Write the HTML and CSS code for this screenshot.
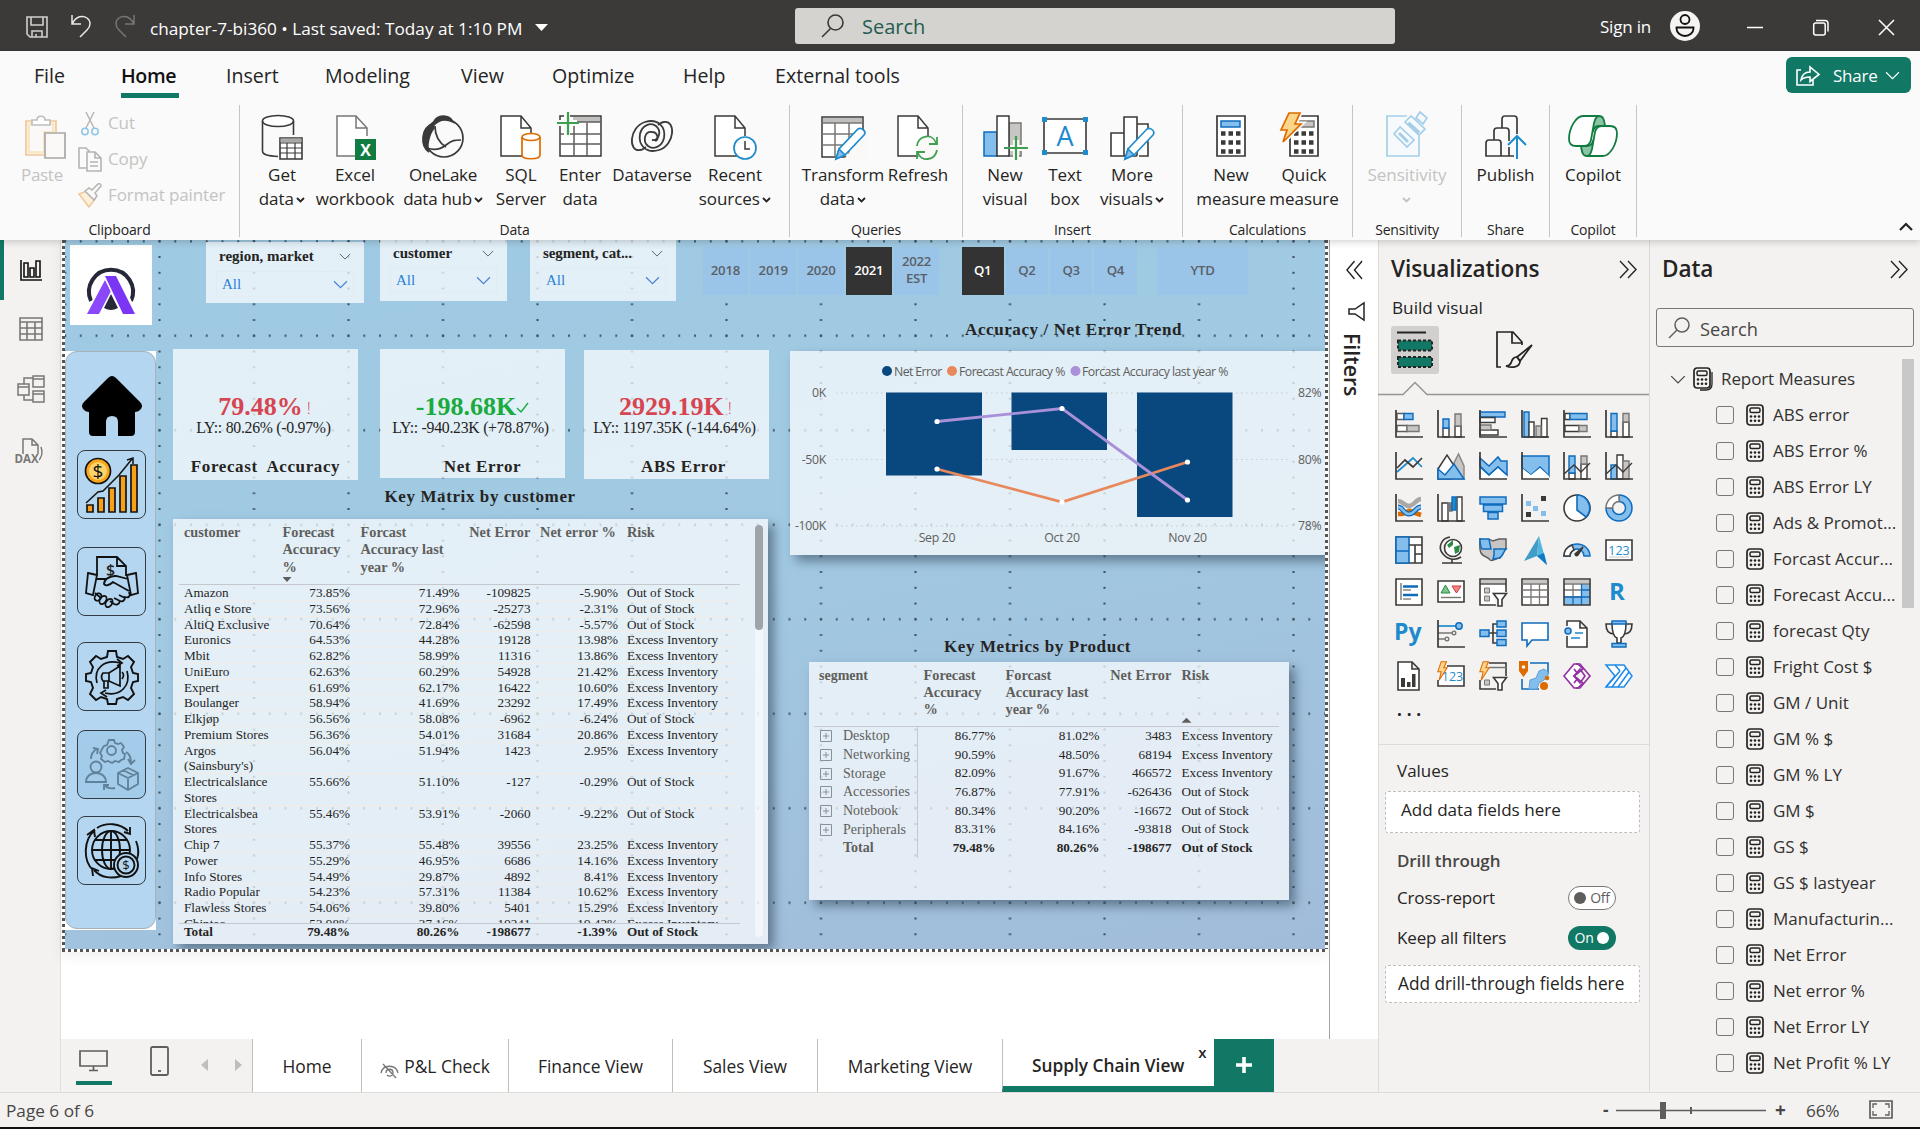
FILE: index.html
```html
<!DOCTYPE html>
<html lang="en">
<head>
<meta charset="utf-8">
<title>chapter-7-bi360</title>
<link rel="stylesheet" href="styles.css">
</head>
<body>
<svg class="defs" width="0" height="0">
  <symbol id="calc" viewBox="0 0 18 22"><g fill="none" stroke="#252423" stroke-width="1.7"><rect x="1" y="1" width="16" height="20" rx="3"/><rect x="4" y="4" width="10" height="4.5" rx="1.5" stroke-width="1.5"/></g><g fill="#252423"><circle cx="5" cy="12.5" r="1.3"/><circle cx="9" cy="12.5" r="1.3"/><circle cx="13" cy="12.5" r="1.3"/><circle cx="5" cy="16.8" r="1.3"/><circle cx="9" cy="16.8" r="1.3"/><circle cx="13" cy="16.8" r="1.3"/></g></symbol>
  <symbol id="chev" viewBox="0 0 14 8"><path d="M1 1l6 6 6-6" fill="none" stroke="currentColor" stroke-width="1.1"/></symbol>
  <symbol id="chev-s" viewBox="0 0 9 6"><path d="M1 1l3.5 3.5L8 1" fill="none" stroke="currentColor" stroke-width="1.8"/></symbol>
  <symbol id="dbl" viewBox="0 0 18 18"><path d="M1 1l8 8-8 8M9 1l8 8-8 8" fill="none" stroke="#252423" stroke-width="1.4"/></symbol>
  <symbol id="doc" viewBox="0 0 48 46"><path d="M32 22V14L22 2H2v40h22M22 2v12h10" fill="#fff" stroke="#3b3a39" stroke-width="1.5"/></symbol>
  <symbol id="bolt" viewBox="0 0 16 30"><path d="M6 1h8l-4 9h5L3 29l3-13H1z" fill="#fbd58a" stroke="#dd6b00" stroke-width="1.6"/></symbol>
  <symbol id="axes" viewBox="0 0 28 28"><path d="M1 0v27h27" fill="none" stroke="#3b3a39" stroke-width="1.7"/></symbol>
  <symbol id="plus-box" viewBox="0 0 12 12"><path d="M.5.5h11v11H.5zM3 6h6M6 3v6" fill="none" stroke="#8a9097"/></symbol>
</svg>

<header class="titlebar">
  <svg class="qa save" width="22" height="22" viewBox="0 0 22 22" fill="none" stroke="#d0cfce" stroke-width="1.6"><path d="M1 1h20v20H4l-3-3zM5 1v8h12V1M6 21v-6h10v6M10 21v-3"/></svg>
  <svg class="qa undo" width="20" height="22" viewBox="0 0 20 22" fill="none" stroke="#e8e8e8" stroke-width="1.5"><path d="M1 0v9h9M1.500 8.500C5 1 12 0 16 3s4 8 0 12l-7 7"/></svg>
  <svg class="qa redo" width="20" height="22" viewBox="0 0 20 22" fill="none" stroke="#777574" stroke-width="1.500"><path d="M19 0v9h-9M18.500 8.500C15 1 8 0 4 3s-4 8 0 12l7 7"/></svg>
  <span class="doc-title">chapter-7-bi360 • Last saved: Today at 1:10 PM</span>
  <svg class="caret" width="13" height="8" viewBox="0 0 13 8"><path d="M0 0h13L6.500 7z" fill="#fff"/></svg>
  <div class="global-search">
    <svg width="24" height="24" viewBox="0 0 24 24" fill="none" stroke="#3b3a39" stroke-width="1.6"><circle cx="14.500" cy="8.500" r="7.500"/><path d="M9.500 14.500L1 23"/></svg>
    <span>Search</span>
  </div>
  <span class="signin">Sign in</span>
  <svg class="avatar" width="30" height="30" viewBox="0 0 30 30"><circle cx="15" cy="15" r="15" fill="#f5f4f2"/><g fill="none" stroke="#111" stroke-width="1.800"><circle cx="15" cy="8.500" r="4.500"/><path d="M6.500 16.500h17v1c0 4-4 7.500-8.500 7.500s-8.500-3.500-8.500-7.500z"/></g></svg>
  <svg class="winbtns" width="150" height="18" viewBox="0 0 150 18" fill="none" stroke="#fff" stroke-width="1.500"><path d="M0 8.500h16M132 1l15 15M147 1l-15 15"/><rect x="66.700" y="4" width="11.500" height="12" rx="2"/><path d="M69 1.500h9q3 0 3 3v8"/></svg>
</header>

<section class="ribbon">
  <nav class="tabs">
    <span class="t-file">File</span><span class="t-home active">Home</span><span class="t-insert">Insert</span><span class="t-model">Modeling</span><span class="t-view">View</span><span class="t-opt">Optimize</span><span class="t-help">Help</span><span>External tools</span>
    <button class="share"><svg width="24" height="21" viewBox="0 0 24 21" fill="none" stroke="#fff" stroke-width="1.600"><path d="M5 5H1v15h16v-5M5 15c1-6 4-8 9-8V2l9 7.500-9 7v-4.500c-4 0-7 1-9 3z"/></svg><span>Share</span><svg class="sh-chev" width="15" height="9"><use href="#chev"/></svg></button>
  </nav>
  <div class="groups">
    <div class="group g-clip">
      <div class="items">
        <div class="btn paste"><svg width="42" height="46" viewBox="0 0 42 46" fill="none" stroke-width="1.700"><path d="M32 18V7H2v34h18" stroke="#f0c79d" fill="#fcf0dc"/><path d="M5 10h24v8h-9v20H5z" fill="#faf9f8" stroke="#f8e3bd"/><path d="M8 11V6h5c0-5 8-5 8 0h5v5z" fill="#fff" stroke="#c0bfbe"/><path d="M21 19h20v25H21z" fill="#faf9f8" stroke="#a9a8a7"/></svg><b>Paste</b></div>
        <div class="clip-list">
          <div><svg width="24" height="25" viewBox="0 0 24 25" fill="none" stroke-width="1.500"><path d="M8 1l8 16M16 1L8 17" stroke="#b8b7b6"/><circle cx="7" cy="20.500" r="3.200" stroke="#8fc4e4"/><circle cx="17" cy="20.500" r="3.200" stroke="#8fc4e4"/></svg><span>Cut</span></div>
          <div><svg width="24" height="25" viewBox="0 0 24 25" fill="none" stroke="#b5b4b3" stroke-width="1.600"><path d="M9 21H1V1h7l4 4M9 5h8l6 6v13H9zM17 5v6h6M12 15h8M12 19h8"/></svg><span>Copy</span></div>
          <div><svg width="24" height="25" viewBox="0 0 24 25" fill="none" stroke-width="1.500"><path d="M1 11l8-3 8 8-6 8z" stroke="#f0c79d" fill="#fdf0d8"/><path d="M7 8l4-3 3 2 6-6q3-1 3 2l-6 7 2 3-3 4z" stroke="#b5b4b3" fill="#faf9f8"/></svg><span>Format painter</span></div>
        </div>
      </div>
      <p>Clipboard</p>
    </div>
    <div class="group g-data">
      <div class="items">
        <div class="btn w74"><svg class="ico" width="42" height="46" viewBox="0 0 42 46" fill="none" stroke="#3b3a39" stroke-width="1.600"><ellipse cx="17" cy="7" rx="15.500" ry="5.500" fill="#fff"/><path d="M1.500 7v30c0 4 6 5 15.500 5.500M32.500 7v14"/><path d="M19 24h22v21H19z" fill="#fff"/><path d="M19.500 24.500h21v4h-21z" fill="#a9a8a7" stroke="none"/><path d="M19 29h22M19 34h22M19 39h22M26 29v16M34 29v16" stroke-width="1.200"/></svg><b>Get<br>data <svg class="cs" width="9" height="6"><use href="#chev-s"/></svg></b></div>
        <div class="btn w72"><svg class="ico" width="42" height="46" viewBox="0 0 42 46"><path d="M33 22V14L22 2H3v40h18M22 2v12h11" fill="#fff" stroke="#797775" stroke-width="1.500"/><path d="M21 25h21v21H21z" fill="#107c41"/><text x="31.500" y="41.500" text-anchor="middle" font-family="Open Sans" font-weight="700" font-size="16" fill="#fff">X</text></svg><b>Excel<br>workbook</b></div>
        <div class="btn w104"><svg class="ico" width="44" height="46" viewBox="0 0 44 46" fill="none" stroke="#3b3a39" stroke-width="1.700"><path d="M12 9C16 0 28 0 32 8c-8-4-14-3-20 4z" fill="#3b3a39"/><path d="M11 10C0 14-1 32 8 38c-3-5 0-18 5-24z" fill="#3b3a39"/><circle cx="23" cy="24" r="19"/><path d="M14 12c0 9 3 16 11 21M6 34c8 3 14 1 19-3 6-5 9-5 15-5"/></svg><b>OneLake<br>data hub <svg class="cs" width="9" height="6"><use href="#chev-s"/></svg></b></div>
        <div class="btn w52"><svg class="ico" width="44" height="46" viewBox="0 0 44 46"><use href="#doc" width="48" height="46"/><g fill="#fff" stroke="#dd6b00" stroke-width="1.700"><path d="M23 23v18c0 5 18 5 18 0V23"/><ellipse cx="32" cy="23" rx="9" ry="3.500"/></g></svg><b>SQL<br>Server</b></div>
        <div class="btn w66"><svg class="ico" width="46" height="46" viewBox="0 0 46 46" fill="none" stroke="#3b3a39" stroke-width="1.500"><path d="M3 2h41v40H3z" fill="#fff"/><path d="M16 3h27v5H16z" fill="#c0bfbe" stroke="none"/><path d="M3 20h41M3 30h41M17 9v33M30 9v33M3 8h41" stroke="#605e5c"/><path d="M-1 9h21M10-2v25" stroke="#faf9f8" stroke-width="6"/><path d="M0 9h22M11-2v23" stroke="#3d9f50" stroke-width="2.200"/></svg><b>Enter<br>data</b></div>
        <div class="btn w78"><svg class="ico" width="44" height="46" viewBox="0 0 44 46" fill="none" stroke="#3b3a39" stroke-width="1.800"><path d="M10 36C-2 38-1 13 15 8c13-4 21 5 19 16-2 9-11 12-16 8-6-5-3-15 4-14 6 0 7 8 3 9"/><path d="M34 8c12-2 11 23-5 28-13 4-21-5-19-16 2-9 11-12 16-8 6 5 3 15-4 14"/><path d="M10 36c3 0 4-2 6-3M34 8c-3 0-4 2-6 3"/></svg><b>Dataverse</b></div>
        <div class="btn w88"><svg class="ico" width="44" height="46" viewBox="0 0 44 46"><use href="#doc" width="48" height="46"/><circle cx="32" cy="34" r="11" fill="#fff" stroke="#1e8bcd" stroke-width="1.700"/><path d="M32 27v8h5" fill="none" stroke="#3b3a39" stroke-width="1.500"/></svg><b>Recent<br>sources <svg class="cs" width="9" height="6"><use href="#chev-s"/></svg></b></div>
      </div>
      <p>Data</p>
    </div>
    <div class="group g-query">
      <div class="items">
        <div class="btn w88"><svg class="ico" width="46" height="46" viewBox="0 0 46 46" fill="none" stroke="#3b3a39" stroke-width="1.500"><path d="M2 3h41v40H2z" fill="#fff"/><path d="M3 4h39v5H3z" fill="#c0bfbe" stroke="none"/><path d="M2 9h41M2 20h41M2 31h41M15 9v34M29 9v34" stroke="#797775"/><path d="M25 44l18-22 4 0v24H24z" fill="#faf9f8" stroke="none"/><path d="M16 45l3-10 19-20c3-2 9 2 6 6L25 41z" fill="#fff" stroke="#1e8bcd" stroke-width="1.700"/><path d="M16 45l3-10 6 6z" fill="#83beec" stroke="#1e8bcd"/></svg><b>Transform<br>data <svg class="cs" width="9" height="6"><use href="#chev-s"/></svg></b></div>
        <div class="btn w62"><svg class="ico" width="44" height="46" viewBox="0 0 44 46"><use href="#doc" width="48" height="46"/><circle cx="31" cy="34" r="12" fill="#faf9f8"/><path d="M21 32c1-11 16-13 19-3M41 23v7h-8M41 36c-2 11-16 12-19 3M21 45v-7h8" fill="none" stroke="#3d9f50" stroke-width="1.800"/></svg><b>Refresh</b></div>
      </div>
      <p>Queries</p>
    </div>
    <div class="group g-insert">
      <div class="items">
        <div class="btn w70"><svg class="ico" width="44" height="46" viewBox="0 0 44 46" stroke-width="1.500"><path d="M1 18h13v24H1z" fill="#83beec" stroke="#0f6cbd"/><path d="M26 9h12v33H26z" fill="#c8c6c4" stroke="#797775"/><path d="M14 2h12v40H14z" fill="#fff" stroke="#3b3a39"/><path d="M27 34h19M33 26v18" stroke="#faf9f8" stroke-width="6"/><path d="M21 34h24M33 22v24" stroke="#3d9f50" stroke-width="2.200"/></svg><b>New<br>visual</b></div>
        <div class="btn w50"><svg class="ico" width="48" height="46" viewBox="0 0 48 46"><path d="M3 5h42v34H3z" fill="#fff" stroke="#3b3a39" stroke-width="1.600"/><g fill="#1e8bcd"><path d="M1 3h5v5H1zM42 3h5v5h-5zM1 36h5v5H1zM42 36h5v5h-5z"/></g><text x="24" y="32" text-anchor="middle" font-family="Open Sans" font-size="27" fill="#1e8bcd">A</text></svg><b>Text<br>box</b></div>
        <div class="btn w84"><svg class="ico" width="46" height="46" viewBox="0 0 46 46" fill="#fff" stroke="#3b3a39" stroke-width="1.600"><path d="M2 19h13v23H2zM28 10h11v32H28zM15 3h13v39H15z"/><path d="M26 45l14-18v18z" fill="#faf9f8" stroke="none"/><path d="M39 28v14h-9"/><path d="M16 45l3-10 19-20c3-2 9 2 6 6L25 41z" stroke="#1e8bcd"/><path d="M16 45l3-10 6 6z" fill="#83beec" stroke="#1e8bcd"/></svg><b>More<br>visuals <svg class="cs" width="9" height="6"><use href="#chev-s"/></svg></b></div>
      </div>
      <p>Insert</p>
    </div>
    <div class="group g-calc">
      <div class="items">
        <div class="btn w74"><svg class="ico" width="30" height="46" viewBox="0 0 30 46"><path d="M1 2h28v40H1z" fill="#fff" stroke="#3b3a39" stroke-width="1.700"/><path d="M5 7h19v6H5z" fill="#83beec" stroke="#0f6cbd" stroke-width="1.500"/><path d="M5 19.500h20M5 28.500h20M5 37.500h20" stroke="#3b3a39" stroke-width="4.500" stroke-dasharray="4.500 3"/></svg><b>New<br>measure</b></div>
        <div class="btn w72"><svg class="ico shl" width="40" height="46" viewBox="0 0 40 46"><path d="M10 2h28v40H10z" fill="#fff" stroke="#3b3a39" stroke-width="1.700"/><path d="M16 7h18v6H16z" fill="#c8c6c4" stroke="#797775" stroke-width="1.500"/><path d="M14 19.500h20M14 28.500h20M14 37.500h20" stroke="#3b3a39" stroke-width="4.500" stroke-dasharray="4.500 3"/><path d="M9-1h11l-5 11h6L3 28l4-12H1z" fill="#fbd58a" stroke="#faf9f8" stroke-width="5"/><path d="M9-1h11l-5 11h6L3 28l4-12H1z" fill="#fbd58a" stroke="#dd6b00" stroke-width="1.700"/></svg><b>Quick<br>measure</b></div>
      </div>
      <p>Calculations</p>
    </div>
    <div class="group g-sens">
      <div class="items">
        <div class="btn dim"><svg class="ico" width="42" height="46" viewBox="0 0 42 46" fill="#f6fafd" stroke="#a5cfe9" stroke-width="1.700"><path d="M33 22v20H1V2h20"/><path d="M8 20l6-7 14 13-7 7z"/><path d="M13 19l9 9" stroke-width="3"/><path d="M19 8l6-6 14 13-6 6z"/><path d="M22 9l11 10" stroke-width="4"/><path d="M30 4l4-6 7 6-4 6z"/></svg><b>Sensitivity<br><svg class="cs one" width="9" height="6"><use href="#chev-s"/></svg></b></div>
      </div>
      <p>Sensitivity</p>
    </div>
    <div class="group g-share">
      <div class="items">
        <div class="btn"><svg class="ico" width="42" height="46" viewBox="0 0 42 46" fill="none" stroke="#3b3a39" stroke-width="1.700"><path d="M17 14V5q0-3 3-3h9q3 0 3 3v15M9 26V17q0-3 3-3h9q3 0 3 3v10M24 33v9M1 42V29q0-3 3-3h9q3 0 3 3v13zM16 42h13" /><path d="M32 22v23M23 31l9-9 9 9" stroke="#1e8bcd" stroke-width="2"/></svg><b>Publish</b></div>
      </div>
      <p>Share</p>
    </div>
    <div class="group g-cop">
      <div class="items">
        <div class="btn"><svg class="ico" width="50" height="46" viewBox="0 0 50 46" stroke="#107c41" stroke-width="1.800"><path d="M26 2h5c4 0 5 3 6 10h-6c-3 0-5 1-6 5l-4-3z" fill="#8cc3a3"/><path d="M24 42h-5c-4 0-5-3-6-10h6c3 0 5-1 6-5l4 3z" fill="#8cc3a3"/><path d="M31 2H15C8 2 1 14 1 25c0 5 2 7 7 7h8c4 0 6-2 7-6l3-17c1-4 2-7 5-7z" fill="#fff"/><path d="M19 42h16c7 0 14-12 14-23 0-5-2-7-7-7h-8c-4 0-6 2-7 6l-3 17c-1 4-2 7-5 7z" fill="#fff"/></svg><b>Copilot</b></div>
      </div>
      <p>Copilot</p>
    </div>
    <svg class="collapse" width="14" height="9" viewBox="0 0 14 9"><path d="M1 8l6-6 6 6" fill="none" stroke="#252423" stroke-width="2.200"/></svg>
  </div>
</section>

<main class="work">
  <aside class="rail">
    <div class="rail-item on"><svg width="22" height="22" viewBox="0 0 22 22" fill="none" stroke="#111" stroke-width="1.600"><path d="M1 1v20h21M4 4h4v14H4zM10 9h4v9h-4zM16 2h4v16h-4z"/></svg></div>
    <div class="rail-item"><svg width="24" height="24" viewBox="0 0 24 24" fill="none" stroke="#797775" stroke-width="1.600"><path d="M1 1h22v22H1zM1 5h22M1 11h22M1 17h22M8 5v18M16 5v18"/></svg></div>
    <div class="rail-item"><svg width="28" height="28" viewBox="0 0 28 28" fill="none" stroke="#797775" stroke-width="1.500"><path d="M16 1h11v11H16zM16 4h11M1 9h11v11H1zM1 12h11M16 16h11v11H16zM16 19h11M7 9V3h9M7 20v5h9"/></svg></div>
    <div class="rail-item dax"><svg width="28" height="26" viewBox="0 0 28 26" fill="none" stroke="#797775" stroke-width="1.500"><path d="M7 16V1h9l6 6v10M16 1v6h6M25 9c2 5 1 11-4 15"/></svg><i>DAX</i></div>
  </aside>

  <div class="center">
    <div class="stage">
      <div class="page-frame"><div class="page">
        <div class="v logo"><svg width="48" height="47" viewBox="0 0 48 47"><path d="M4 34A22 22 0 1 1 44 34" fill="none" stroke="#262838" stroke-width="4"/><path d="M17 11L-2 47h52L34 9z" fill="#fff"/><path d="M24 27l7 14q-7 4-14 0z" fill="#262838"/><path d="M18 13l6 11-12 23H0z" fill="#8a48fa"/><path d="M18 9h11l19 38H36z" fill="#fff" stroke="#fff" stroke-width="3"/><path d="M18 9h11l19 38H36z" fill="#7a35f5"/></svg></div>

        <div class="v nav-back"><div class="nav">
          <svg class="home" width="60" height="60" viewBox="0 0 60 60"><path d="M26 2q4-4 8 0l24 24q4 4 0 8-2 2-5 2v20q0 4-4 4H36V46q0-6-6-6t-6 6v14H11q-4 0-4-4V36q-3 0-5-2-4-4 0-8z"/></svg>
          <div class="nb n1"><svg width="54" height="56" viewBox="0 0 54 56" stroke="#141414" stroke-width="1.700"><circle cx="13" cy="14" r="12.500" fill="#f9a61c"/><circle cx="13" cy="14" r="9" fill="#fcd46c" stroke="none"/><text x="13" y="20.500" text-anchor="middle" font-family="Open Sans" font-size="19" stroke="none" fill="#111">$</text><path d="M2 48h6v7H2zM13 41h6v14h-6zM24 31h6v24h-6zM35 19h6v36h-6zM46 8h6v47h-6z" fill="#f9a01b"/><path d="M1 46l12-11 5-1 16-16 13-16M42 3l6-2v6" fill="none" stroke-width="1.500"/></svg></div>
          <div class="nb n2"><svg width="54" height="54" viewBox="0 0 54 54" fill="none" stroke="#111" stroke-width="1.800"><path d="M12 21V2h20l9 9v10M32 2v9h9M3 18l9 2-4 20-7-2zM51 18l-9 2 4 20 7-2zM12 24h8c5 0 6-4 11-3l12 3M10 38l6 5M44 36L28 27c-4 4-8 4-9 2 0-5 6-8 11-8M44 37c2 5-1 6-4 5 0 4-3 5-5 4-1 4-4 4-6 3l-4-3"/><ellipse cx="13" cy="42" rx="3" ry="4" transform="rotate(35 13 42)"/><ellipse cx="18" cy="45" rx="3" ry="4.500" transform="rotate(35 18 45)"/><ellipse cx="24" cy="48" rx="3" ry="4.500" transform="rotate(35 24 48)"/><path d="M34 40l6 3M29 43l6 3"/></svg><i>$</i></div>
          <div class="nb n3"><svg width="54" height="54" viewBox="0 0 54 54" fill="none" stroke="#111" stroke-width="1.900"><path d="M23 1h8l1 6 6 2 5-3 6 6-3 5 2 6 5 1v7l-5 1-2 6 3 6-6 6-5-3-6 2-1 5h-8l-1-5-6-2-5 3-6-6 3-6-2-6-5-1v-7l5-1 2-6-3-5 6-6 5 3 6-2z"/><path d="M12 33C8 18 20 9 35 13M42 21c4 14-6 26-22 22M32 9l5 4-5 3M22 47l-6-4 5-3M18 23h6l11-7v20l-11-5h-6q-3-4 0-8zM24 23v8M19 31v7h4v-7M37 22q3 3 0 7" stroke-width="1.700"/></svg></div>
          <div class="nb n4"><svg width="54" height="52" viewBox="0 0 54 52" fill="none" stroke="#5f8199" stroke-width="1.800"><path d="M24 1h5l1 3 3 1 3-1 3 4-2 3 1 3 2 1-1 5-3 1-2 2-4-1-3 2-4-2-3 1-4-3 1-3-2-3 2-4 2-3 3-1z"/><circle cx="26.500" cy="11.500" r="4.500"/><circle cx="11" cy="28" r="5.500"/><path d="M1 43c0-12 20-12 20 0zM33 34l10-5 10 5v11l-10 6-10-6zM33 34l10 5 10-5M43 39v12M38 31l10 5M6 20c0-5 2-8 6-10M8 9l5 1-1 5M41 13c4 2 5 5 5 11M43 20l3 5 4-4M30 49c-5 1-8 0-11-3M19 51v-5h5"/></svg></div>
          <div class="nb n5"><svg width="56" height="56" viewBox="0 0 56 56" fill="none" stroke="#111" stroke-width="1.900"><circle cx="27" cy="27" r="19"/><path d="M27 8v38M8 27h38M11 17h32M11 37h30"/><ellipse cx="27" cy="27" rx="9" ry="19"/><path d="M11 7C-1 17-1 38 9 47M13 5c9-6 23-5 31 3M40 9l6 2V4M52 18q4 10 1 18M3 12l7-5 1 7M8 45l1 8M8 45l7 3M10 47c7 8 18 9 27 6"/><circle cx="42" cy="42" r="12" fill="#b4d6f0"/><circle cx="42" cy="42" r="8.500"/><text x="42" y="47" text-anchor="middle" font-family="Open Sans" font-size="13" stroke="none" fill="#111">$</text></svg></div>
        </div></div>

        <div class="v slicer s1"><div class="sh"><b>region, market</b><svg width="12" height="7"><use href="#chev"/></svg></div><div class="sv"><span>All</span><svg width="15" height="9"><use href="#chev"/></svg></div></div>
        <div class="v slicer s2"><div class="sh"><b>customer</b><svg width="12" height="7"><use href="#chev"/></svg></div><div class="sv"><span>All</span><svg width="15" height="9"><use href="#chev"/></svg></div></div>
        <div class="v slicer s3"><div class="sh"><b>segment, cat...</b><svg width="12" height="7"><use href="#chev"/></svg></div><div class="sv"><span>All</span><svg width="15" height="9"><use href="#chev"/></svg></div></div>

        <div class="v tiles years"><span>2018</span><span>2019</span><span>2020</span><span class="sel">2021</span><span>2022<br>EST</span></div>
        <div class="v tiles qtrs"><span class="sel">Q1</span><span>Q2</span><span>Q3</span><span>Q4</span></div>
        <div class="v tiles ytd"><span>YTD</span></div>

        <h3 class="v h-trend">Accuracy / Net Error Trend</h3>

        <div class="v kpi k1"><div class="kv red">79.48%<em>!</em></div><div class="ly">LY:: 80.26% (-0.97%)</div><h3>Forecast&nbsp; Accuracy</h3></div>
        <div class="v kpi k2"><div class="kv green">-198.68K<svg width="13" height="11" viewBox="0 0 13 11"><path d="M1 6l4 4L12 1" fill="none" stroke="#1aab40" stroke-width="1.400"/></svg></div><div class="ly">LY:: -940.23K (+78.87%)</div><h3>Net Error</h3></div>
        <div class="v kpi k3"><div class="kv red">2929.19K<em>!</em></div><div class="ly">LY:: 1197.35K (-144.64%)</div><h3>ABS Error</h3></div>

        <h3 class="v h-matrix">Key Matrix by customer</h3>
        <div class="v card cust">
          <div class="row head"><span>customer</span><span>Forecast Accuracy %<i class="down"></i></span><span>Forcast Accuracy last year %</span><span>Net Error</span><span>Net error %</span><span>Risk</span></div>
          <div class="rows">
            <div class="row"><span>Amazon</span><span>73.85%</span><span>71.49%</span><span>-109825</span><span>-5.90%</span><span>Out of Stock</span></div>
            <div class="row"><span>Atliq e Store</span><span>73.56%</span><span>72.96%</span><span>-25273</span><span>-2.31%</span><span>Out of Stock</span></div>
            <div class="row"><span>AltiQ Exclusive</span><span>70.64%</span><span>72.84%</span><span>-62598</span><span>-5.57%</span><span>Out of Stock</span></div>
            <div class="row"><span>Euronics</span><span>64.53%</span><span>44.28%</span><span>19128</span><span>13.98%</span><span>Excess Inventory</span></div>
            <div class="row"><span>Mbit</span><span>62.82%</span><span>58.99%</span><span>11316</span><span>13.86%</span><span>Excess Inventory</span></div>
            <div class="row"><span>UniEuro</span><span>62.63%</span><span>60.29%</span><span>54928</span><span>21.42%</span><span>Excess Inventory</span></div>
            <div class="row"><span>Expert</span><span>61.69%</span><span>62.17%</span><span>16422</span><span>10.60%</span><span>Excess Inventory</span></div>
            <div class="row"><span>Boulanger</span><span>58.94%</span><span>41.69%</span><span>23292</span><span>17.49%</span><span>Excess Inventory</span></div>
            <div class="row"><span>Elkjøp</span><span>56.56%</span><span>58.08%</span><span>-6962</span><span>-6.24%</span><span>Out of Stock</span></div>
            <div class="row"><span>Premium Stores</span><span>56.36%</span><span>54.01%</span><span>31684</span><span>20.86%</span><span>Excess Inventory</span></div>
            <div class="row two"><span>Argos<br>(Sainsbury's)</span><span>56.04%</span><span>51.94%</span><span>1423</span><span>2.95%</span><span>Excess Inventory</span></div>
            <div class="row two"><span>Electricalslance<br>Stores</span><span>55.66%</span><span>51.10%</span><span>-127</span><span>-0.29%</span><span>Out of Stock</span></div>
            <div class="row two"><span>Electricalsbea<br>Stores</span><span>55.46%</span><span>53.91%</span><span>-2060</span><span>-9.22%</span><span>Out of Stock</span></div>
            <div class="row"><span>Chip 7</span><span>55.37%</span><span>55.48%</span><span>39556</span><span>23.25%</span><span>Excess Inventory</span></div>
            <div class="row"><span>Power</span><span>55.29%</span><span>46.95%</span><span>6686</span><span>14.16%</span><span>Excess Inventory</span></div>
            <div class="row"><span>Info Stores</span><span>54.49%</span><span>29.87%</span><span>4892</span><span>8.41%</span><span>Excess Inventory</span></div>
            <div class="row"><span>Radio Popular</span><span>54.23%</span><span>57.31%</span><span>11384</span><span>10.62%</span><span>Excess Inventory</span></div>
            <div class="row"><span>Flawless Stores</span><span>54.06%</span><span>39.80%</span><span>5401</span><span>15.29%</span><span>Excess Inventory</span></div>
            <div class="row"><span>Chiptec</span><span>53.98%</span><span>37.16%</span><span>19241</span><span>19.42%</span><span>Excess Inventory</span></div>
          </div>
          <div class="row total"><span>Total</span><span>79.48%</span><span>80.26%</span><span>-198677</span><span>-1.39%</span><span>Out of Stock</span></div>
          <div class="track"><div class="thumb"></div></div>
        </div>

        <div class="v card chart">
          <svg width="536" height="204" viewBox="0 0 536 204">
            <g stroke="#c4cbd1" stroke-dasharray="1.500 3.500"><path d="M46 42h454M46 108.500h454M46 175h454"/></g>
            <g fill="#09477f"><path d="M96 41.500h96v83H96zM221.500 41.500H317v57.500h-95.500zM347 41.500h95.500v124.500H347z"/></g>
            <g fill="none" stroke-width="2.800"><path d="M147 118l125 33 125.500-40" stroke="#e8885c"/><path d="M147 70.500l125-13L397.500 149" stroke="#a991d9"/></g>
            <g fill="#fff"><circle cx="147" cy="118" r="2.600"/><circle cx="272" cy="151" r="2.600"/><circle cx="397.500" cy="111" r="2.600"/><circle cx="147" cy="70.500" r="2.600"/><circle cx="272" cy="57.500" r="2.600"/><circle cx="397.500" cy="149" r="2.600"/></g>
            <circle cx="97" cy="20" r="5" fill="#09477f"/><circle cx="162" cy="20" r="5" fill="#e8885c"/><circle cx="285.500" cy="20" r="5" fill="#a991d9"/>
            <g class="ct"><text x="104" y="24.500" textLength="48">Net Error</text><text x="169" y="24.500" textLength="106">Forecast Accuracy %</text><text x="292" y="24.500" textLength="146">Forcast Accuracy last year %</text>
            <g text-anchor="end"><text x="36" y="46">0K</text><text x="36" y="113">-50K</text><text x="36" y="179">-100K</text></g>
            <text x="508" y="46">82%</text><text x="508" y="113">80%</text><text x="508" y="179">78%</text>
            <g text-anchor="middle"><text x="147" y="191">Sep 20</text><text x="272" y="191">Oct 20</text><text x="397.500" y="191">Nov 20</text></g></g>
          </svg>
        </div>

        <h3 class="v h-prod">Key Metrics by Product</h3>
        <div class="v card prod">
          <div class="prow phead"><span>segment</span><span>Forecast Accuracy %</span><span>Forcast Accuracy last year %</span><span>Net Error</span><span>Risk<i class="up"></i></span></div>
          <div class="prow"><span><svg width="12" height="12"><use href="#plus-box"/></svg>Desktop</span><span>86.77%</span><span>81.02%</span><span>3483</span><span>Excess Inventory</span></div>
          <div class="prow"><span><svg width="12" height="12"><use href="#plus-box"/></svg>Networking</span><span>90.59%</span><span>48.50%</span><span>68194</span><span>Excess Inventory</span></div>
          <div class="prow"><span><svg width="12" height="12"><use href="#plus-box"/></svg>Storage</span><span>82.09%</span><span>91.67%</span><span>466572</span><span>Excess Inventory</span></div>
          <div class="prow"><span><svg width="12" height="12"><use href="#plus-box"/></svg>Accessories</span><span>76.87%</span><span>77.91%</span><span>-626436</span><span>Out of Stock</span></div>
          <div class="prow"><span><svg width="12" height="12"><use href="#plus-box"/></svg>Notebook</span><span>80.34%</span><span>90.20%</span><span>-16672</span><span>Out of Stock</span></div>
          <div class="prow"><span><svg width="12" height="12"><use href="#plus-box"/></svg>Peripherals</span><span>83.31%</span><span>84.16%</span><span>-93818</span><span>Out of Stock</span></div>
          <div class="prow ptotal"><span>Total</span><span>79.48%</span><span>80.26%</span><span>-198677</span><span>Out of Stock</span></div>
        </div>
      </div></div>
      <aside class="filters"><svg class="flip" width="17" height="20" viewBox="0 0 18 18" preserveAspectRatio="none"><use href="#dbl"/></svg><svg class="funnel" width="17" height="19" viewBox="0 0 17 19" fill="none" stroke="#252423" stroke-width="1.500"><path d="M16 1v17L7 12H1V7h6z"/></svg><b>Filters</b></aside>
    </div>
    <footer class="pages">
      <div class="views">
        <div class="desk"><svg width="29" height="22" viewBox="0 0 29 22" fill="none" stroke="#605e5c" stroke-width="1.700"><path d="M1 1h27v15H1zM14.500 16v4M10 20.500h9"/></svg></div>
        <svg class="phone" width="19" height="30" viewBox="0 0 19 30" fill="none" stroke="#605e5c" stroke-width="1.800"><rect x="1" y="1" width="17" height="28" rx="1.500"/><path d="M8 25h3"/></svg>
        <svg class="ar" width="7" height="12" viewBox="0 0 7 12"><path d="M7 0v12L0 6z" fill="#c0bebc"/></svg>
        <svg class="ar r" width="7" height="12" viewBox="0 0 7 12"><path d="M0 0v12l7-6z" fill="#c0bebc"/></svg>
      </div>
      <span class="pt p1">Home</span>
      <span class="pt p2"><svg width="19" height="16" viewBox="0 0 19 16" fill="none" stroke="#797775" stroke-width="1.300"><path d="M1 10C3 1 16 1 18 10M6 10c0-5 7-5 7 0 0 3-4 4-6 2M3 1l13 14"/></svg>P&amp;L Check</span>
      <span class="pt p3">Finance View</span><span class="pt p4">Sales View</span><span class="pt p5">Marketing View</span>
      <span class="pt p6">Supply Chain View<i>x</i></span>
      <span class="add"><svg width="16" height="16" viewBox="0 0 16 16"><path d="M8 0v16M0 8h16" stroke="#fff" stroke-width="3.600"/></svg></span>
    </footer>
  </div>

  <aside class="viz">
    <div class="ph"><h2>Visualizations</h2><svg width="18" height="19" viewBox="0 0 18 18" preserveAspectRatio="none"><use href="#dbl"/></svg></div>
    <div class="bv">Build visual</div>
    <div class="modes"><div class="mode on"><svg width="36" height="38" viewBox="0 0 36 38"><path d="M0 1.500h29" stroke="#252423" stroke-width="2"/><path d="M1 9.500h34v10H1zM1 26h34v10H1z" fill="#117865" stroke="#252423" stroke-width="2" stroke-dasharray="3 2"/></svg></div>
    <svg width="37" height="38" viewBox="0 0 37 38" fill="none" stroke="#252423" stroke-width="1.700"><path d="M5 36H1V1h16l9 10v3M16 1v11h10"/><path d="M36 14L21 26l3 4z" fill="#f3f2f1"/><path d="M21 26c-4 0-5 3-6 6-1 2-3 3-5 3 5 2 14 2 14-5z"/></svg></div>
    <svg class="notch" width="271" height="15" viewBox="0 0 271 15"><path d="M0 13.500h25l12-12 12 12h222" fill="none" stroke="#979593" stroke-width="1.500"/></svg>
    <div class="vgrid">
      <svg viewBox="0 0 28 28"><g stroke-width="1.400"><path d="M2 3.500h7v6H2z" fill="#fff" stroke="#605e5c"/><path d="M9 3.500h9v6H9z" fill="#83beec" stroke="#0f6cbd"/><path d="M2 15.500h10v6H2z" fill="#fff" stroke="#605e5c"/><path d="M12 15.500h12v6H12z" fill="#c8c6c4" stroke="#797775"/></g><use href="#axes"/></svg>
      <svg viewBox="0 0 28 28"><g stroke-width="1.400"><path d="M6 18h6v9H6zM18 16h6v11h-6z" fill="#fff" stroke="#3b3a39"/><path d="M6 9h6v9H6z" fill="#83beec" stroke="#0f6cbd"/><path d="M18 4h6v12h-6z" fill="#c8c6c4" stroke="#797775"/></g><use href="#axes"/></svg>
      <svg viewBox="0 0 28 28"><g stroke-width="1.400"><path d="M1 2h25v5H1z" fill="#83beec" stroke="#0f6cbd"/><path d="M1 7.500h15v5H1zM1 20h18v5H1z" fill="#fff" stroke="#3b3a39"/><path d="M1 15h11v5H1z" fill="#c8c6c4" stroke="#797775"/></g><use href="#axes"/></svg>
      <svg viewBox="0 0 28 28"><g stroke-width="1.400"><path d="M3 2h5v25H3z" fill="#83beec" stroke="#0f6cbd"/><path d="M8 12h5v15H8zM20.500 8.500H26V27h-5.500z" fill="#fff" stroke="#3b3a39"/><path d="M15 16h5v11h-5z" fill="#c8c6c4" stroke="#797775"/></g><use href="#axes"/></svg>
      <svg viewBox="0 0 28 28"><g stroke-width="1.400"><path d="M2 3.500h5v6H2zM2 15.500h14v6H2z" fill="#fff" stroke="#3b3a39"/><path d="M7 3.500h17v6H7z" fill="#83beec" stroke="#0f6cbd"/><path d="M16 15.500h8v6h-8z" fill="#c8c6c4" stroke="#797775"/></g><use href="#axes"/></svg>
      <svg viewBox="0 0 28 28"><g stroke-width="1.400"><path d="M6 21h6v6H6zM18 12h6v15h-6z" fill="#fff" stroke="#3b3a39"/><path d="M6 3.500h6V21H6z" fill="#83beec" stroke="#0f6cbd"/><path d="M18 3.500h6V12h-6z" fill="#c8c6c4" stroke="#797775"/></g><use href="#axes"/></svg>

      <svg viewBox="0 0 28 28" fill="none" stroke-width="1.700"><path d="M2 20L18 6l9 9" stroke="#1e8bcd"/><path d="M2 16l8-8 8 7 9-9" stroke="#3b3a39"/><use href="#axes"/></svg>
      <svg viewBox="0 0 28 28" stroke-width="1.500"><path d="M15 27V15l6.500-13L27 14v13z" fill="#c8c6c4" stroke="#8a8886"/><path d="M1 17l9-14 8 12-4 12H1z" fill="#fff" stroke="#3b3a39"/><path d="M1 17l7 6 9-11 10 15H1z" fill="#83beec" stroke="#0f6cbd"/></svg>
      <svg viewBox="0 0 28 28" stroke-width="1.500"><path d="M1 6l9 8 9-9 3 4h6v14l-9-8-9 8-9-9z" fill="#83beec" stroke="#0f6cbd"/><path d="M2 16l8 8 9-8 9 8v3H2z" fill="#fff"/><path d="M1 15l9 8 9-8 9 8" fill="none" stroke="#0f6cbd"/><use href="#axes"/></svg>
      <svg viewBox="0 0 28 28" stroke-width="1.500"><path d="M1 4h27v20l-9-9-9 8-9-7z" fill="#83beec" stroke="#0f6cbd"/><path d="M2 17l8 6 9-7 9 8v3H2z" fill="#fff"/><use href="#axes"/></svg>
      <svg viewBox="0 0 28 28" stroke-width="1.400" fill="#fff" stroke="#3b3a39"><path d="M6 21h6v6H6zM18 12h6v15h-6z"/><path d="M6 4h6v17H6z" fill="#83beec" stroke="#0f6cbd"/><path d="M18 4h6v8h-6z" fill="#c8c6c4" stroke="#797775"/><path d="M1 22l10-9 7 7 9-9" fill="none"/><use href="#axes"/></svg>
      <svg viewBox="0 0 28 28" stroke-width="1.400" fill="#fff" stroke="#3b3a39"><path d="M6 13h6v14H6z" fill="#83beec" stroke="#0f6cbd"/><path d="M12 3h6v24h-6z"/><path d="M18 9h6v18h-6z" fill="#c8c6c4" stroke="#797775"/><path d="M1 22l10-9 7 7 9-9" fill="none"/><use href="#axes"/></svg>

      <svg viewBox="0 0 28 28" fill="none"><path d="M3 20h4c5 0 6-6 10-2l9 3" stroke="#dd6b00" stroke-width="4.500"/><path d="M3 7c5 0 6 5 11 5s7-7 12-7" stroke="#a9a8a7" stroke-width="4.500"/><path d="M3 13c5 0 5 7 11 7s6-7 12-7" stroke="#0f6cbd" stroke-width="5"/><path d="M3 13c5 0 5 7 11 7s6-7 12-7" stroke="#83beec" stroke-width="2.500"/><use href="#axes"/></svg>
      <svg viewBox="0 0 28 28" stroke-width="1.400" fill="#fff" stroke="#3b3a39"><path d="M5 9h6v18H5zM20 3h5v24h-5z"/><path d="M11 9h4v8h-4z" fill="#797775" stroke="#797775"/><path d="M15 3h4v13h-4z" fill="#1e8bcd" stroke="#0f6cbd"/><use href="#axes"/></svg>
      <svg viewBox="0 0 28 28" stroke-width="1.500" fill="#83beec" stroke="#0f6cbd"><path d="M1 3h26v7H1zM4.500 11h19v6.500h-19zM9 18.500h10V25H9z"/></svg>
      <svg viewBox="0 0 28 28"><g fill="#83beec"><path d="M5 7h5v5H5zM12 12h5v5h-5zM20 17h5v5h-5z"/></g><path d="M20 2h5v5h-5zM5 18h5v5H5z" fill="#3b3a39"/><use href="#axes"/></svg>
      <svg viewBox="0 0 28 28" stroke-width="1.600"><circle cx="14" cy="14" r="13" fill="#fff" stroke="#3b3a39"/><path d="M14 1a13 13 0 0 1 9 22L14 16z" fill="#83beec" stroke="#0f6cbd"/></svg>
      <svg viewBox="0 0 28 28" stroke-width="1.500"><path d="M14 1a13 13 0 1 1-13 13h6.500A6.500 6.500 0 1 0 14 7.500z" fill="#83beec" stroke="#0f6cbd"/><path d="M1 14A13 13 0 0 1 14 1v6.500A6.500 6.500 0 0 0 7.500 14z" fill="#fff" stroke="#797775"/></svg>

      <svg viewBox="0 0 28 28" stroke-width="1.600" fill="#fff" stroke="#3b3a39"><path d="M1 1h26v26H1z"/><path d="M1 1h13v14H1zM1 15h13v12H1z" fill="#83beec" stroke="#0f6cbd"/><path d="M14 9h13M20 9v18M20 18h7" /></svg>
      <svg viewBox="0 0 28 28" fill="none" stroke="#3b3a39" stroke-width="1.600"><circle cx="16" cy="12" r="8.500" fill="#fff"/><path d="M10 9l6-5v5l-4 3zM17 11l6-2-1 7-4 2z" fill="#2e8b45" stroke="none"/><path d="M13 1C5 2 0 11 6 18s14 6 18 3M15 23v4M5 27h20"/></svg>
      <svg viewBox="0 0 28 28" stroke-width="1.500" stroke="#605e5c"><path d="M1 3c5 2 9-1 13 2l6-2h7v10c-3 2-3 5-6 9-4 0-7 4-10 2-2-4-6-2-9-7-2-4-1-9-1-14z" fill="#c8c6c4"/><path d="M1 3h9l2 10H3C1 10 1 7 1 3zM15 13h12c-3 3-3 8-7 9l-6 1 1-4z" fill="#83beec" stroke="#0f6cbd"/></svg>
      <svg viewBox="0 0 28 28"><path d="M18 0L3 25l13-5z" fill="#3f9dc8"/><path d="M18 0l8 29-10-9z" fill="#52b5dc"/><path d="M16 20l10 9-3-12z" fill="#0f78c8"/></svg>
      <svg viewBox="0 0 28 28" stroke-width="1.500"><path d="M1 20A13 12 0 0 1 27 20h-6q-1-7-7-7t-7 7z" fill="#83beec" stroke="#0f6cbd"/><path d="M1 20A13 12 0 0 1 9 9l2 5q-4 2-4 6z" fill="#fff" stroke="#3b3a39"/><path d="M20 11l-8 7q1 3 3 1z" stroke="#3b3a39" fill="#3b3a39"/></svg>
      <svg viewBox="0 0 28 28"><path d="M1 4h26v20H1z" fill="#fff" stroke="#3b3a39" stroke-width="1.600"/><text x="14" y="18.500" text-anchor="middle" font-family="Open Sans" font-size="12.500" fill="#1e8bcd">123</text><path d="M4 21h20" stroke="#c8c6c4"/></svg>

      <svg viewBox="0 0 28 28"><path d="M1 1h26v26H1z" fill="#fff" stroke="#3b3a39" stroke-width="1.600"/><path d="M6 5v17M8 12h8M8 21h8" stroke="#8a8886" stroke-width="1.600"/><path d="M8 8.500h15M8 17h15" stroke="#0f6cbd" stroke-width="2.600"/></svg>
      <svg viewBox="0 0 28 28"><path d="M1 3h26v21H1z" fill="#fff" stroke="#3b3a39" stroke-width="1.600"/><path d="M4 15l4.500-8 4.500 8z" fill="#7cc48a" stroke="#2e8b45"/><path d="M15 8h9l-4.500 7z" fill="#f08a88" stroke="#d13438"/><path d="M4 19.500h20" stroke="#797775" stroke-width="1.400"/></svg>
      <svg viewBox="0 0 28 28"><path d="M1 1h26v26H1z" fill="#fff" stroke="#3b3a39" stroke-width="1.600"/><path d="M2 2h24v3.500H2z" fill="#c8c6c4"/><path d="M1 6h26" stroke="#3b3a39" stroke-width="1.300"/><path d="M5.500 10h5v5h-5zM5.500 18h5v5h-5z" fill="#c8c6c4" stroke="#797775"/><path d="M13 14h17v16H18z" fill="#f3f2f1"/><path d="M14.500 15.500h13l-4.500 6V28h-4v-6.500z" fill="#fff" stroke="#3b3a39" stroke-width="1.600"/></svg>
      <svg viewBox="0 0 28 28"><path d="M1 1h26v26H1z" fill="#fff" stroke="#3b3a39" stroke-width="1.600"/><path d="M2 2h24v3.500H2z" fill="#c8c6c4"/><path d="M1 6h26M1 12h26M1 19h26M10 6v21M18.500 6v21" stroke="#797775" stroke-width="1.300"/></svg>
      <svg viewBox="0 0 28 28"><path d="M1 1h26v26H1z" fill="#fff"/><path d="M18.500 6H27v21H1v-8h17.500z" fill="#83beec"/><path d="M2 2h24v3.500H2z" fill="#c8c6c4"/><path d="M1 6h26M1 12h17M10 6v13M1 19h17" stroke="#797775" stroke-width="1.300"/><path d="M18.500 6v21M18 12h9M1 19h26M10 19v8" stroke="#0f6cbd" stroke-width="1.300"/><path d="M1 1h26v26H1z" fill="none" stroke="#3b3a39" stroke-width="1.600"/></svg>
      <svg viewBox="0 0 28 28"><text x="12" y="22" text-anchor="middle" font-family="Open Sans" font-weight="700" font-size="24" fill="#1e8bcd">R</text></svg>

      <svg class="of" viewBox="0 0 28 28"><text x="-1" y="20" font-family="Open Sans" font-weight="700" font-size="23" fill="#1e8bcd">Py</text></svg>
      <svg viewBox="0 0 28 28"><path d="M1 6h20" stroke="#1e8bcd" stroke-width="1.700"/><path d="M1 13h15M1 19h8" stroke="#797775" stroke-width="1.500"/><circle cx="22" cy="6" r="3.200" fill="#83beec" stroke="#0f6cbd" stroke-width="1.500"/><circle cx="17" cy="13" r="1.800" fill="#fff" stroke="#797775" stroke-width="1.400"/><circle cx="10" cy="19" r="1.800" fill="#fff" stroke="#797775" stroke-width="1.400"/><use href="#axes"/></svg>
      <svg viewBox="0 0 28 28"><path d="M10 13h8M18 4h-4v19h4" fill="none" stroke="#3b3a39" stroke-width="1.600"/><path d="M1 10h9v6.500H1zM18 1h9v6h-9zM18 10h9v6.500h-9zM18 19.500h9v6h-9z" fill="#83beec" stroke="#0f6cbd" stroke-width="1.500"/></svg>
      <svg viewBox="0 0 28 28"><path d="M1 3h26v17H11l-5 6v-6H1z" fill="#fff" stroke="#0f6cbd" stroke-width="1.600"/></svg>
      <svg viewBox="0 0 28 28"><path d="M4 6V1h13l7 7v19H4V16M17 1v7h7" fill="#fff" stroke="#3b3a39" stroke-width="1.600"/><circle cx="5" cy="11" r="3" fill="#83beec" stroke="#0f6cbd" stroke-width="1.500"/><path d="M12 13h8M8 18h9" stroke="#1e8bcd" stroke-width="1.400"/></svg>
      <svg viewBox="0 0 28 28" stroke="#3b3a39" stroke-width="1.600" fill="#fff"><path d="M7 4H1q0 10 8 10M21 4h6q0 10-8 10" fill="none"/><path d="M7 3h14c0 9-2 14-5 15v5h-4v-5C9 17 7 12 7 3z"/><path d="M7 1h14v3H7zM7 23.500h14V27H7z" fill="#83beec" stroke="#0f6cbd" stroke-width="1.400"/></svg>

      <svg viewBox="0 0 28 28"><path d="M3 0h14l7 7v21H3zM17 0v7h7" fill="#fff" stroke="#3b3a39" stroke-width="1.600"/><path d="M6 16h4v9H6zM12 20h3.500v5H12zM17 12h3.500v13H17z" fill="#3b3a39"/></svg>
      <svg class="of" viewBox="0 0 28 28"><path d="M10 4h17v20H1V18" fill="#fff" stroke="#3b3a39" stroke-width="1.600"/><text x="15.500" y="18.500" text-anchor="middle" font-family="Open Sans" font-size="12.500" fill="#1e8bcd">123</text><use href="#bolt" x="-2" y="-1" width="15" height="20" /></svg>
      <svg class="of" viewBox="0 0 28 28"><path d="M10 1h17v26H1V18" fill="#f3f2f1" stroke="#3b3a39" stroke-width="1.600"/><path d="M10 5.500h17" stroke="#797775" stroke-width="1.500"/><path d="M5.500 18h5v5h-5z" fill="#c8c6c4" stroke="#797775"/><path d="M13 14h17v16H18z" fill="#f3f2f1"/><path d="M14.500 15.500h13l-4.500 6V28h-4v-6.500z" fill="#fff" stroke="#3b3a39" stroke-width="1.600"/><use href="#bolt" x="-2" y="-1" width="15" height="20" /></svg>
      <svg class="of" viewBox="0 0 28 28"><path d="M9 1h18v11M1 17v10h17" fill="none" stroke="#0f6cbd" stroke-width="1.600"/><path d="M27 10l-4-3-5 2-3 7-6 2-1 9h8l2-6 5-3 4-4z" fill="#83beec" stroke="#5aa3dc"/><path d="M-2-1h9v10L2.500 15-2 9z" fill="#dd6b00"/><circle cx="2.500" cy="5" r="1.800" fill="#fff"/><circle cx="26" cy="16" r="2.300" fill="#dd6b00"/><circle cx="23" cy="24" r="4" fill="#dd6b00"/></svg>
      <svg viewBox="0 0 28 28" fill="none" stroke="#8f2fa0" stroke-width="1.600"><path d="M1 14L11 2h4l5 5-9 7 9 7-5 5h-4z" fill="#fff"/><path d="M13 2h4l10 12-10 12h-4M11 7l4 5M11 14l6-7 5 7-5 7zM11 21l4-5"/></svg>
      <svg viewBox="0 0 28 28" fill="#fff" stroke="#1e8bea" stroke-width="1.500"><path d="M1 3h18l8 11-8 11H1l9-11z"/><path d="M10 3l5 6M15 9L1 25M21 6L7 25M24 10L13 25" fill="none"/></svg>
    </div>
    <div class="more">· · ·</div>
    <div class="wells">
      <div class="lbl">Values</div>
      <div class="well">Add data fields here</div>
      <div class="dt">Drill through</div>
      <div class="opt"><span>Cross-report</span><div class="tg off"><i></i>Off</div></div>
      <div class="opt o2"><span>Keep all filters</span><div class="tg on">On<i></i></div></div>
      <div class="well w2">Add drill-through fields here</div>
    </div>
  </aside>

  <aside class="data">
    <div class="ph"><h2>Data</h2><svg width="18" height="19" viewBox="0 0 18 18" preserveAspectRatio="none"><use href="#dbl"/></svg></div>
    <div class="dsearch"><svg width="22" height="22" viewBox="0 0 22 22" fill="none" stroke="#605e5c" stroke-width="1.500"><circle cx="14" cy="8" r="7"/><path d="M9 13L1 21"/></svg><span>Search</span></div>
    <div class="tree">
      <div class="tn root"><svg class="tc" width="18" height="11"><use href="#chev"/></svg><svg width="20" height="24" viewBox="0 0 20 24"><use href="#calc" width="18" height="22"/><path d="M7 23h6q6 0 6-6V5" fill="none" stroke="#252423" stroke-width="1.300"/></svg><span>Report Measures</span></div>
      <div class="tn"><i></i><svg><use href="#calc"/></svg><span>ABS error</span></div>
      <div class="tn"><i></i><svg><use href="#calc"/></svg><span>ABS Error %</span></div>
      <div class="tn"><i></i><svg><use href="#calc"/></svg><span>ABS Error LY</span></div>
      <div class="tn"><i></i><svg><use href="#calc"/></svg><span>Ads &amp; Promot...</span></div>
      <div class="tn"><i></i><svg><use href="#calc"/></svg><span>Forcast Accur...</span></div>
      <div class="tn"><i></i><svg><use href="#calc"/></svg><span>Forecast Accu...</span></div>
      <div class="tn"><i></i><svg><use href="#calc"/></svg><span>forecast Qty</span></div>
      <div class="tn"><i></i><svg><use href="#calc"/></svg><span>Fright Cost $</span></div>
      <div class="tn"><i></i><svg><use href="#calc"/></svg><span>GM / Unit</span></div>
      <div class="tn"><i></i><svg><use href="#calc"/></svg><span>GM % $</span></div>
      <div class="tn"><i></i><svg><use href="#calc"/></svg><span>GM % LY</span></div>
      <div class="tn"><i></i><svg><use href="#calc"/></svg><span>GM $</span></div>
      <div class="tn"><i></i><svg><use href="#calc"/></svg><span>GS $</span></div>
      <div class="tn"><i></i><svg><use href="#calc"/></svg><span>GS $ lastyear</span></div>
      <div class="tn"><i></i><svg><use href="#calc"/></svg><span>Manufacturin...</span></div>
      <div class="tn"><i></i><svg><use href="#calc"/></svg><span>Net Error</span></div>
      <div class="tn"><i></i><svg><use href="#calc"/></svg><span>Net error %</span></div>
      <div class="tn"><i></i><svg><use href="#calc"/></svg><span>Net Error LY</span></div>
      <div class="tn"><i></i><svg><use href="#calc"/></svg><span>Net Profit % LY</span></div>
      <div class="tree-thumb"></div>
    </div>
  </aside>
</main>

<footer class="status">
  <span class="pg">Page 6 of 6</span>
  <b class="minus">-</b>
  <svg class="slider" width="151" height="18" viewBox="0 0 151 18"><path d="M0 9.500h150" stroke="#605e5c" stroke-width="1.300"/><path d="M44 1h6v17h-6zM74 6h2v7h-2z" fill="#605e5c"/></svg>
  <b class="plus">+</b>
  <span class="pct">66%</span>
  <svg class="fit" width="24" height="19" viewBox="0 0 24 19" fill="none" stroke="#605e5c" stroke-width="1.700"><path d="M1 1h22v17H1z"/><path d="M4 8V4h4M16 4h4v4M20 11v4h-4M8 15H4v-4" stroke-width="1.300"/></svg>
</footer>
</body>
</html>
```
FILE: styles.css
```css
* { box-sizing: border-box; }
html, body { margin: 0; height: 1129px; overflow: hidden; }
body { width: 1920px; display: flex; flex-direction: column; background: #f3f2f1; color: #252423; font: 17px/24px "Open Sans", "Noto Sans", sans-serif; position: relative; }
h2, h3, p { margin: 0; }
svg { display: block; flex: none; overflow: visible; }
i, em { font-style: normal; }
.defs { position: absolute; }

.titlebar { height: 51px; flex: none; background: #3b3a38; color: #fff; display: flex; align-items: center; padding-left: 26px; white-space: nowrap; }
.save { margin-right: 23px; margin-top: 3px; }
.undo { margin-right: 24px; }
.redo { margin-right: 15px; }
.doc-title { width: 374px; margin-top: 7px; font-size: 17.200px; }
.caret { margin-left: 11px; margin-top: 4px; }
.global-search { width: 600px; height: 36px; margin-left: 247px; background: #d4d3d0; border-radius: 3px; display: flex; align-items: center; padding-left: 26px; gap: 17px; color: #245c4f; font-size: 20px; }
.global-search span { padding-top: 2px; }
.signin { margin-left: 205px; width: 55px; letter-spacing: -.2px; margin-top: 3px; }
.avatar { margin-left: 15px; }
.winbtns { margin-left: 47px; margin-top: 5px; }

.ribbon { height: 189px; flex: none; background: #fafafa; position: relative; z-index: 2; box-shadow: 0 2px 7px rgba(0,0,0,.18); display: flex; flex-direction: column; }
.tabs { height: 49px; display: flex; padding-left: 34px; font-size: 19.600px; line-height: 49px; white-space: nowrap; }
.tabs > span { height: 47px; }
.t-file { width: 87px; }
.tabs .t-home { width: 58px; margin-right: 47px; font-weight: 600; letter-spacing: -.4px; border-bottom: 5px solid #117865; color: #111; }
.t-insert { width: 99px; } .t-model { width: 136px; } .t-view { width: 91px; } .t-opt { width: 131px; } .t-help { width: 92px; }
.share { margin: 6px 9px 0 auto; width: 125px; height: 36px; background: #117865; color: #fff; border: 0; border-radius: 6px; font: 17px "Open Sans", sans-serif; letter-spacing: -.2px; display: flex; align-items: center; padding: 0 0 0 10px; gap: 13px; }
.sh-chev { margin-left: -6px; }
.groups { display: flex; flex: 1; padding-top: 5px; }
.group { height: 132px; border-right: 1px solid #c8c6c4; display: flex; flex-direction: column; }
.items { flex: 1; display: flex; padding-top: 9px; }
.group p { font-size: 14px; line-height: 22px; text-align: center; height: 18px; letter-spacing: -.15px; }
.btn { display: flex; flex-direction: column; align-items: center; width: 100%; }
.btn b { font-weight: 400; text-align: center; white-space: nowrap; line-height: 24.300px; margin-top: 3px; letter-spacing: -.05px; }
.cs { display: inline-block; margin-left: -2px; vertical-align: 2px; }
.cs.one { margin: 0; }
.shl { margin-left: -8px; }
.w74 { width: 74px; } .w72 { width: 72px; } .w104 { width: 104px; } .w52 { width: 52px; } .w66 { width: 66px; } .w78 { width: 78px; } .w88 { width: 88px; } .w62 { width: 62px; } .w70 { width: 70px; } .w50 { width: 50px; } .w84 { width: 84px; }
.w104 b { letter-spacing: -.3px; }
.g-clip { width: 240px; color: #c4c3c1; } .g-clip p, .g-sens p { color: #252423; }
.g-clip .items { padding-left: 22px; }
.paste { width: 47px; align-items: flex-start; } .paste svg { margin-left: 2px; } .paste b { margin-left: -1px; letter-spacing: -.3px; }
.clip-list { margin: -9px 0 0 9px; display: flex; flex-direction: column; white-space: nowrap; }
.clip-list div { height: 36px; display: flex; align-items: center; gap: 6px; letter-spacing: -.1px; }
.g-data { width: 550px; } .g-data .items { padding-left: 5px; }
.g-query { width: 173px; } .g-query .items { padding-left: 9px; }
.g-insert { width: 220px; } .g-insert .items { padding-left: 7px; }
.g-calc { width: 170px; } .g-calc .items { padding-left: 11px; }
.g-sens { width: 109px; color: #c4c3c1; } .g-share { width: 88px; } .g-cop { width: 87px; }
.collapse { margin: 117px 7px 0 auto; }

.work { height: 852px; flex: none; display: flex; }
.rail { width: 61px; border-right: 1px solid #e1dfdd; display: flex; flex-direction: column; }
.rail-item { height: 59.500px; display: flex; align-items: center; justify-content: center; border-left: 4px solid transparent; padding-right: 3px; }
.rail-item.on { border-color: #117865; }
.dax { flex-direction: column; padding-right: 5px; height: 64px; }
.dax i { font-size: 11.500px; font-weight: 700; line-height: 10px; color: #797775; margin: -10px 6px 0 0; background: #f3f2f1; }

.center { width: 1317px; display: flex; flex-direction: column; }
.stage { height: 799px; background: #fff; display: flex; justify-content: space-between; }
.page-frame { width: 1266px; height: 712px; margin-left: 1px; padding: 0 3px 3px; box-shadow: 0 3px 14px rgba(0,0,0,.08);
  background: repeating-linear-gradient(180deg,#555 0 3px,#fff 3px 6px) 0 0 / 3px 709px no-repeat, repeating-linear-gradient(180deg,#555 0 3px,#fff 3px 6px) 100% 0 / 3px 709px no-repeat, repeating-linear-gradient(90deg,#555 0 3px,#fff 3px 6px); }
.page { width: 1260px; height: 709px; position: relative; overflow: hidden; color: #252423; font-family: "Liberation Serif", "Times New Roman", serif;
  background: radial-gradient(circle at 50% 50%,#40535f 0 .9px,transparent 1.400px) -7.875px -46px / 15.750px 94.500px, radial-gradient(circle at 50% 50%,#40535f 0 .9px,transparent 1.400px) -47.250px -6.600px / 94.500px 15.750px, linear-gradient(168deg,#9fcae3 0%,#a1c9e2 45%,#a1bcd9 100%); }
/* visuals are placed freely on the report page */
.v { position: absolute; }
.card, .kpi, .slicer { background: rgba(255,255,255,.71); }
.logo { left: 5px; top: 5px; width: 82px; height: 80px; background: #fff; display: flex; align-items: center; justify-content: center; padding-top: 10px; }
.nav-back { left: 0; top: 111px; width: 91px; height: 579px; background: #fff; }
.nav { height: 578px; background: #b4d6f0; border: 1px solid #a8b0b8; border-radius: 12px; display: flex; flex-direction: column; align-items: center; padding-top: 24px; }
.home { margin-left: 2px; }
.nb { width: 69px; height: 69px; border: 1px solid #333c44; border-radius: 8px; display: flex; align-items: center; justify-content: center; position: relative; flex: none; margin-left: 2px; }
.n1 { margin-top: 14px; } .n2 { margin-top: 28px; } .n3 { margin-top: 26px; } .n4 { margin-top: 19px; background: #a3cbea; } .n5 { margin-top: 17px; }
.nb i { position: absolute; left: 28px; top: 12px; font: 600 16px/20px "Open Sans", sans-serif; }

.slicer { height: 61px; padding-right: 13px; display: flex; flex-direction: column; }
.sh { display: flex; justify-content: space-between; align-items: center; font-size: 15px; padding: 0 0 0 13px; height: 26px; }
.sh b { margin-top: -1px; }
.s3 .sh b { letter-spacing: -.1px; }
.sh svg, .sv svg { color: #605e5c; }
.sv { margin: 1px -3px 0 10px; height: 26px; border: 1px solid rgba(225,225,225,.35); display: flex; justify-content: space-between; align-items: center; padding: 0 5px 0 5px; color: #2b7fd8; font-size: 15px; }
.sv svg { color: #4a80d8; }
.s1 { left: 141px; top: 2px; width: 158px; } .s2 { left: 315px; top: 0; width: 127px; } .s3 { left: 465px; top: 0; width: 146px; }
.s1 .sh { padding-top: 1px; height: 28px; }

.tiles { top: 7px; height: 48px; display: grid; gap: 2px; font: 600 13.200px/17px "Open Sans", sans-serif; letter-spacing: -.25px; color: #5a6068; }
.tiles span { background: #9ac5e9; display: flex; align-items: center; justify-content: center; text-align: center; padding-bottom: 2px; }
.tiles .sel { background: #333; color: #fff; }
.years { left: 637.500px; width: 237px; grid-template-columns: repeat(5,1fr); } .qtrs { left: 896.500px; width: 175px; grid-template-columns: repeat(4,1fr); } .ytd { left: 1092px; width: 91px; }

h3 { font-size: 17px; line-height: 20px; letter-spacing: .6px; white-space: nowrap; }
.h-trend { left: 900px; top: 80px; } .h-matrix { left: 319.500px; top: 247px; } .h-prod { left: 879px; top: 397px; }
.kpi { width: 185px; height: 129px; text-align: center; white-space: nowrap; }
.k1 { left: 108px; top: 109px; height: 131px; } .k2 { left: 315px; top: 109px; } .k3 { left: 519px; top: 110px; }
.kv { margin-top: 43px; font-size: 26px; line-height: 30px; font-weight: 700; display: flex; justify-content: center; align-items: center; }
.k3 .kv { margin-top: 42px; }
.k1 .kv, .k3 .kv { padding-right: 2px; }
.kv em { font: 300 17px "Open Sans", sans-serif; margin-left: 4px; }
.red { color: #d64550; } .green { color: #1aab40; }
.ly { font-size: 15.800px; line-height: 18px; letter-spacing: -.28px; margin: -3px 4px 0 0; }
.kpi h3 { margin-top: 20px; } .k2 h3 { padding-left: 20px; } .k3 h3 { padding-left: 14px; }

.card { box-shadow: 6px 6px 10px rgba(55,75,95,.6); }
.cust { left: 108px; top: 279px; width: 595px; height: 425px; }
.row { display: grid; grid-template-columns: 86px 85px 109.500px 71px 87.500px 122px; margin-left: 6px; width: 561px; font-size: 13.200px; line-height: 15.500px; height: 15.750px; border-bottom: 1px solid #f2ece8; }
.row.two { height: 31.500px; }
.row span { text-align: right; white-space: nowrap; }
.row span:first-child { text-align: left; padding-left: 5px; }
.row span:last-child { text-align: left; padding-left: 9px; }
.row.head { font-size: 14.300px; line-height: 17.300px; font-weight: 700; color: #605e5c; height: 66px; padding-top: 5px; border-bottom: 1px solid #c5c9cd; }
.row.head span:nth-child(2), .row.head span:nth-child(3) { text-align: left; white-space: normal; }
.row.head span:nth-child(2) { padding: 0 10px 0 17.500px; } .row.head span:nth-child(3) { padding: 0 10px 0 10.500px; }
.row.head span:nth-child(5) { padding-right: 2px; letter-spacing: .1px; } .row.head span:nth-child(4) { letter-spacing: .1px; }
.down, .up { display: block; width: 9px; height: 5px; background: #605e5c; clip-path: polygon(0 0,100% 0,50% 100%); margin-top: 1px; }
.rows { height: 338px; overflow: hidden; }
.row.total { font-weight: 700; border-bottom: 0; border-top: 1px solid #c5c9cd; }
.track { position: absolute; left: 582px; top: 6px; width: 8px; height: 412px; border-radius: 4px; background: rgba(255,255,255,.5); }
.thumb { height: 105px; border-radius: 4px; background: #a0a4a8; }

.chart { left: 724.500px; top: 111px; width: 540px; height: 204px; }
.ct { font: 12.300px "Open Sans", sans-serif; fill: #605e5c; letter-spacing: -.3px; }

.prod { left: 744px; top: 421.500px; width: 480px; height: 238px; }
.prow { display: grid; grid-template-columns: 104px 77.500px 104px 72px 107px; margin-left: 5px; width: 465px; height: 18.700px; line-height: 18.400px; font-size: 13.200px; }
.prow span { text-align: right; white-space: nowrap; }
.prow span:first-child { text-align: left; color: #605e5c; font-size: 14px; border-right: 1px solid #c5c9cd; display: flex; align-items: center; gap: 11px; padding-left: 6px; }
.prow span:last-child { text-align: left; padding-left: 10px; }
.phead { height: 65.500px; padding-top: 5px; border-bottom: 1px solid #c5c9cd; font-size: 14.300px; line-height: 17.200px; font-weight: 700; color: #605e5c; }
.prow.phead span:first-child { border: 0; align-items: flex-start; padding-left: 5px; }
.phead span:nth-child(2), .phead span:nth-child(3) { text-align: left; white-space: normal; }
.prow.phead span:nth-child(2) { padding-left: 5.500px; } .phead span:nth-child(3) { padding-left: 10px; } .phead span:nth-child(4) { letter-spacing: .1px; }
.up { clip-path: polygon(50% 0,100% 100%,0 100%); margin-top: 34px; width: 10px; }
.ptotal { font-weight: 700; } .prow.ptotal span:first-child { padding-left: 29px; }

.filters { width: 49px; border-left: 1px solid #a6a4a2; display: flex; flex-direction: column; align-items: center; background: #fff; }
.flip { transform: scaleX(-1); margin: 20px 0 0; }
.funnel { margin: 22px -4px 12px 0; }
.filters b { writing-mode: vertical-rl; font: 600 21.300px/24px "Open Sans", sans-serif; color: #252423; margin-right: 4px; }

.pages { height: 53px; display: flex; background: #f3f2f1; line-height: 54px; white-space: nowrap; }
.views { width: 191px; display: flex; }
.desk { width: 36px; height: 46px; margin-left: 15px; padding: 11px 0 0 3px; border-bottom: 4px solid #117865; }
.phone { margin: 7px 0 0 38px; } .ar { margin: 20px 0 0 32px; } .ar.r { margin-left: 27px; }
.pt { background: #fff; border-left: 1px solid #c0bebc; display: flex; justify-content: center; font-size: 17.400px; position: relative; }
.p1 { width: 109px; } .p2 { width: 147px; gap: 5px; } .p2 svg { margin-top: 24px; } .p3 { width: 164px; } .p4 { width: 145px; } .p5 { width: 185px; }
.p6 { width: 211.500px; font-weight: 600; font-size: 17.300px; border-bottom: 6px solid #117865; }
.p6 i { position: absolute; right: 7px; top: -14px; font-size: 15px; }
.add { width: 60px; background: #117865; display: flex; align-items: center; justify-content: center; padding-bottom: 2px; }

.viz, .data { border-left: 1px solid #dddbd9; display: flex; flex-direction: column; }
.viz { width: 271px; } .data { width: 271px; }
.ph { height: 54px; padding: 4px 12px 0 12px; display: flex; align-items: center; justify-content: space-between; }
h2 { font-size: 22.600px; font-weight: 600; letter-spacing: -.1px; }
.bv { height: 28px; padding: 2px 0 0 13px; font-weight: 500; font-size: 17.200px; }
.modes { height: 59px; display: flex; padding: 4px 0 0 12px; gap: 57px; }
.modes > svg { margin-top: 5px; }
.mode { width: 48px; height: 48px; background: #d2d0ce; border-radius: 3px; display: flex; align-items: center; justify-content: center; }
.notch { margin-left: -1px; }
.vgrid { display: grid; grid-template-columns: repeat(6,28px); gap: 14px; padding: 14px 0 0 16px; }
.vgrid svg { width: 28px; height: 28px; }
.more { height: 52px; padding: 10px 0 0 18px; font-weight: 700; letter-spacing: .2px; border-bottom: 1px solid #dddbd9; margin-top: 3px; }
.wells { padding: 13px 9px 0 6px; line-height: 26px; white-space: nowrap; }
.lbl, .dt, .opt { padding-left: 12px; }
.well { height: 42px; background: #fff; border: 1px dashed #c0bebc; border-radius: 3px; margin-top: 7px; padding: 5px 0 0 15px; font-size: 17.100px; }
.dt { font-weight: 600; margin-top: 15px; letter-spacing: -.1px; color: #484644; }
.opt { display: flex; justify-content: space-between; align-items: center; height: 40px; margin-top: 4px; padding-right: 24px; letter-spacing: -.15px; }
.o2 { margin-top: 0; }
.tg { width: 48px; height: 24px; border-radius: 12px; display: flex; align-items: center; justify-content: center; gap: 4px; font-size: 14px; letter-spacing: -.3px; }
.tg i { width: 12px; height: 12px; border-radius: 50%; background: currentColor; }
.tg.off { background: #fff; border: 1px solid #797775; color: #605e5c; } .tg.on { background: #117865; color: #fff; }
.well.w2 { height: 38px; padding: 5px 0 0 12px; font-size: 17.250px; }

.dsearch { height: 39px; margin: 14px 6px 0; border: 1px solid #797775; border-radius: 3px; display: flex; align-items: center; gap: 10px; padding-left: 11px; font-size: 18.300px; color: #484644; background: #f3f2f1; }
.dsearch span { padding-top: 2px; }
.tree { position: relative; padding-top: 14px; white-space: nowrap; color: #323130; }
.tn { height: 36px; display: flex; align-items: center; padding-left: 66px; }
.tn i { width: 18px; height: 18px; border: 1px solid #797775; border-radius: 3px; margin-right: 12px; }
.tn > svg { width: 18px; height: 22px; } .tn span { margin-left: 9px; }
.tn.root { padding-left: 20px; } .tn.root .tc { width: 16px; height: 9px; margin-right: 7px; color: #484644; } .tn.root svg { width: 20px; height: 24px; } .tn.root span { margin-left: 8px; letter-spacing: -.1px; }
.tree-thumb { position: absolute; right: 6px; top: 12px; width: 12px; height: 249px; background: #c8c8c8; }

.status { height: 37px; border-top: 1px solid #dddbd9; border-bottom: 2px solid #111; display: flex; align-items: center; padding-left: 6px; color: #484644; flex: none; position: relative; font-size: 17.200px; }
.status span { padding-top: 2px; }
.pg { width: 1597px; } .minus { width: 13px; } .plus { margin: 0 17px 0 5px; font-size: 19px; width: 17px; text-align: center; }
.pct { width: 63px; letter-spacing: -.2px; } .fit { margin-top: -1px; }
```
